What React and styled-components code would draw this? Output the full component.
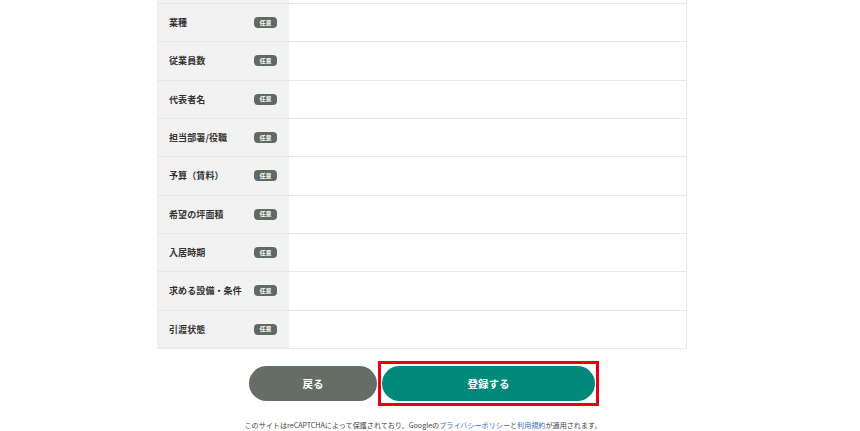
import React from 'react'
import { styled, createGlobalStyle } from 'styled-components'

const GlobalStyle = createGlobalStyle`
  html, body {
    margin: 0;
    padding: 0;
    background: #ffffff;
    overflow: hidden;
  }
  body {
    font-family: "Noto Sans CJK JP", "Noto Sans", sans-serif;
    color: #333333;
  }
`

const Page = styled.div`
  width: 844px;
  height: 431px;
  overflow: hidden;
  display: flex;
  flex-direction: column;
  align-items: center;
`

const Table = styled.div`
  width: 530px;
  border-right: 1px solid #e6e6e6;
  box-sizing: border-box;
  display: flex;
  flex-direction: column;
`

const Row = styled.div`
  display: flex;
  height: ${p => (p.$stub ? '4px' : '38.33px')};
  box-sizing: border-box;
  border-bottom: 1px solid #e8e8e8;
`

const Label = styled.div`
  width: 132px;
  flex-shrink: 0;
  background: #f2f2f2;
  display: flex;
  align-items: center;
  justify-content: space-between;
  padding: 0 12px 0 12px;
  box-sizing: border-box;
  font-size: 9px;
  font-weight: 700;
  color: #333333;
  letter-spacing: 0.1px;
`

const Badge = styled.span`
  display: inline-flex;
  align-items: center;
  justify-content: center;
  width: 23px;
  height: 11px;
  border-radius: 4px;
  background: #5e6a62;
  color: #ffffff;
  font-size: 6px;
  font-weight: 700;
  line-height: 1;
`

const Field = styled.div`
  flex: 1;
  background: #ffffff;
`

const Actions = styled.div`
  display: flex;
  align-items: center;
  gap: 1px;
  margin: 12px 0 0 4px;
`

const Button = styled.button`
  width: ${p => p.$w}px;
  height: 35px;
  border: none;
  border-radius: 18px;
  background: ${p => p.$bg};
  color: #ffffff;
  font-family: "Noto Sans CJK JP", "Noto Sans", sans-serif;
  font-size: 10.5px;
  font-weight: 700;
  cursor: pointer;
  padding: 0;
`

const Highlight = styled.div`
  border: 3px solid #e60012;
  padding: 2px 1px;
  display: flex;
`

const Notice = styled.p`
  margin: 14px 0 0 2px;
  font-size: 7.1px;
  color: #444444;
  text-align: center;
  letter-spacing: 0;
`

const Link = styled.a`
  color: #3b6cc2;
  text-decoration: none;
`

const rows = [
  '業種',
  '従業員数',
  '代表者名',
  '担当部署/役職',
  '予算（賃料）',
  '希望の坪面積',
  '入居時期',
  '求める設備・条件',
  '引渡状態',
]

export default function App() {
  return (
    <>
      <GlobalStyle />
      <Page>
        <Table>
          <Row $stub>
            <Label />
            <Field />
          </Row>
          {rows.map(label => (
            <Row key={label}>
              <Label>
                <span>{label}</span>
                <Badge>任意</Badge>
              </Label>
              <Field />
            </Row>
          ))}
        </Table>
        <Actions>
          <Button $w={128} $bg="#646e66">戻る</Button>
          <Highlight>
            <Button $w={213} $bg="#00897a">登録する</Button>
          </Highlight>
        </Actions>
        <Notice>
          このサイトはreCAPTCHAによって保護されており、Googleの
          <Link href="#">プライバシーポリシー</Link>と
          <Link href="#">利用規約</Link>が適用されます。
        </Notice>
      </Page>
    </>
  )
}
